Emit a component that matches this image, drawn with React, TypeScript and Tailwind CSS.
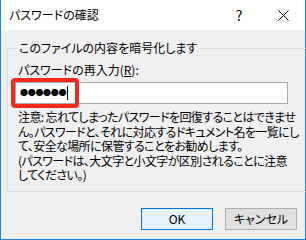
import React from "react";

const font = "font-['Noto_Sans_CJK_JP','Noto_Sans',sans-serif] [font-feature-settings:'palt']";

const App = () => {
  return (
    <div className={`w-[306px] h-[240px] flex flex-col border-x border-b border-[#1c84d8] text-[12px] text-black ${font}`}>
      {/* Title bar */}
      <div className="h-[30px] bg-white flex items-center shrink-0">
        <span className="pl-[8px] flex-1 leading-none">パスワードの確認</span>
        <span className="w-[16px] text-center text-[14px] leading-none mr-[31px]">?</span>
        <svg width="11" height="11" viewBox="0 0 11 11" className="mr-[16px]">
          <path d="M0.5 0.5L10.5 10.5M10.5 0.5L0.5 10.5" stroke="#000" strokeWidth="1" />
        </svg>
      </div>

      {/* Body */}
      <div className="flex-1 bg-[#f0f0f0] flex flex-col px-[6px]">
        <fieldset className="mt-[10px] border border-[#dcdcdc] w-[292px] h-[152px] px-[10px]">
          <legend className="-ml-[1px] px-[2px] leading-[16px]">このファイルの内容を暗号化します</legend>
          <div className="mt-[7px] leading-[14px]">
            パスワードの再入力(<span className="underline">R</span>):
          </div>
          <div className="relative mt-[5px] -ml-[3px]">
            <div className="w-[273px] h-[22px] bg-white border border-[#a9a9a9] flex items-center pl-[4px]">
              <span className="text-[8px] tracking-[-0.3px] leading-none">●●●●●●</span>
              <span className="w-px h-[14px] bg-black ml-[1px]" />
            </div>
            <div className="absolute -left-[4px] -top-[4px] w-[68px] h-[30px] border-[4px] border-[#f52a1c] rounded-[4px]" />
          </div>
          <p className="mt-[6px] leading-[14.5px] whitespace-nowrap tracking-[-0.6px]">
            注意: 忘れてしまったパスワードを回復することはできませ
            <br />
            ん。パスワードと、それに対応するドキュメント名を一覧にし
            <br />
            て、安全な場所に保管することをお勧めします。
            <br />
            (パスワードは、大文字と小文字が区別されることに注意
            <br />
            してください。)
          </p>
        </fieldset>

        {/* Buttons */}
        <div className="flex justify-end gap-[12px] mt-[16px] pr-[2px]">
          <button className="w-[72px] h-[22px] bg-[#e5f1fb] border border-[#0078d7] leading-none">OK</button>
          <button className="w-[72px] h-[22px] bg-[#e1e1e1] border border-[#adadad] leading-none">キャンセル</button>
        </div>
      </div>
    </div>
  );
};

export default App;
